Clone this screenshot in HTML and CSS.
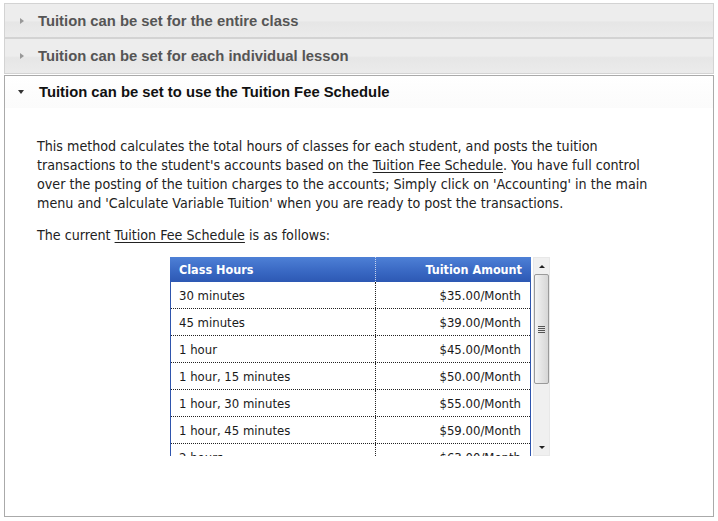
FILE: index.html
```html
<!DOCTYPE html>
<html>
<head>
<meta charset="utf-8">
<link rel="stylesheet" href="styles.css">
</head>
<body>
<div class="accordion">
  <div class="acc-header">
    <span class="tri-right"></span>
    <span class="acc-title">Tuition can be set for the entire class</span>
  </div>
  <div class="acc-header second">
    <span class="tri-right"></span>
    <span class="acc-title">Tuition can be set for each individual lesson</span>
  </div>
  <div class="acc-panel">
    <div class="acc-header active">
      <span class="tri-down"></span>
      <span class="acc-title">Tuition can be set to use the Tuition Fee Schedule</span>
    </div>
    <div class="acc-content">
      <p class="para">This method calculates the total hours of classes for each student, and posts the tuition<br>transactions to the student's accounts based on the <u>Tuition Fee Schedule</u>. You have full control<br>over the posting of the tuition charges to the accounts; Simply click on 'Accounting' in the main<br>menu and 'Calculate Variable Tuition' when you are ready to post the transactions.</p>
      <p class="para second-para">The current <u>Tuition Fee Schedule</u> is as follows:</p>
      <div class="grid">
        <div class="grid-table">
          <div class="grid-head">
            <div class="col-a">Class Hours</div>
            <div class="col-b">Tuition Amount</div>
          </div>
          <div class="grid-body">
            <div class="row"><div class="col-a">30 minutes</div><div class="col-b">$35.00/Month</div></div>
            <div class="row"><div class="col-a">45 minutes</div><div class="col-b">$39.00/Month</div></div>
            <div class="row"><div class="col-a">1 hour</div><div class="col-b">$45.00/Month</div></div>
            <div class="row"><div class="col-a">1 hour, 15 minutes</div><div class="col-b">$50.00/Month</div></div>
            <div class="row"><div class="col-a">1 hour, 30 minutes</div><div class="col-b">$55.00/Month</div></div>
            <div class="row"><div class="col-a">1 hour, 45 minutes</div><div class="col-b">$59.00/Month</div></div>
            <div class="row"><div class="col-a">2 hours</div><div class="col-b">$63.00/Month</div></div>
          </div>
        </div>
        <div class="scrollbar">
          <div class="sb-btn"><span class="sb-up"></span></div>
          <div class="sb-track">
            <div class="sb-thumb"><span class="grip"></span></div>
          </div>
          <div class="sb-btn"><span class="sb-down"></span></div>
        </div>
      </div>
    </div>
  </div>
</div>
</body>
</html>
```

FILE: styles.css
```css
html, body {
  margin: 0;
  padding: 0;
  background: #ffffff;
}
body {
  width: 718px;
  height: 521px;
  overflow: hidden;
}
.accordion {
  margin: 3px 4px 0 4px;
  width: 710px;
  display: flex;
  flex-direction: column;
}
.acc-header {
  box-sizing: border-box;
  height: 35px;
  border: 1px solid #d3d3d3;
  background: linear-gradient(#ededed 0%, #ededed 50%, #e6e6e6 55%, #ebebeb 100%);
  display: flex;
  align-items: center;
  padding-left: 15px;
  font-family: "Liberation Sans", Arial, sans-serif;
  font-weight: bold;
  font-size: 14.8px;
  color: #555555;
}
.acc-header.second {
  height: 36px;
}
.acc-title {
  margin-left: 14px;
}
.tri-right {
  width: 0;
  height: 0;
  border-top: 3.5px solid transparent;
  border-bottom: 3.5px solid transparent;
  border-left: 4px solid #999999;
}
.tri-down {
  width: 0;
  height: 0;
  border-left: 3.5px solid transparent;
  border-right: 3.5px solid transparent;
  border-top: 4px solid #333333;
  margin-left: -1px;
  margin-right: 1px;
}
.acc-panel {
  box-sizing: border-box;
  margin-top: 1px;
  height: 442px;
  border: 1px solid #aaaaaa;
  display: flex;
  flex-direction: column;
}
.acc-header.active {
  border: none;
  height: 32px;
  padding-left: 14px;
  background: linear-gradient(#ffffff, #fbfbfb);
  color: #111111;
}
.acc-content {
  padding: 16px 0 0 32px;
  font-family: "DejaVu Sans Condensed", "DejaVu Sans", sans-serif;
  font-size: 14.15px;
  color: #222222;
}
.para {
  margin: 13px 0 0 0;
  line-height: 19px;
  white-space: nowrap;
}
.para u {
  text-decoration: underline;
  text-underline-offset: 2px;
}
.second-para {
  margin-top: 13px;
}
.grid {
  margin: 12px 0 0 133px;
  width: 380px;
  height: 199px;
  display: flex;
  gap: 2px;
  font-size: 13px;
}
.grid-table {
  width: 361px;
  height: 199px;
  overflow: hidden;
  display: flex;
  flex-direction: column;
}
.grid-head {
  flex: none;
  height: 25px;
  display: flex;
  align-items: center;
  background: linear-gradient(#4e80d6, #3867c2 60%, #2d58b3);
  color: #ffffff;
  font-weight: bold;
  font-size: 12.5px;
}
.grid-head .col-a {
  height: 25px;
  line-height: 25px;
  border-right: 1px dotted #c8d4ee;
}
.grid-head .col-b {
  line-height: 25px;
}
.col-a {
  box-sizing: border-box;
  width: 206px;
  padding-left: 9px;
}
.col-b {
  box-sizing: border-box;
  flex: 1;
  text-align: right;
  padding-right: 9px;
}
.grid-body {
  flex: 1;
  border-left: 1px solid #2f55ad;
  border-right: 1px solid #2f55ad;
  overflow: hidden;
}
.row {
  box-sizing: border-box;
  height: 27px;
  display: flex;
  align-items: center;
  border-bottom: 1px dotted #222222;
  color: #1a1a1a;
}
.row .col-a,
.row .col-b {
  height: 26px;
  line-height: 28px;
}
.row .col-a {
  width: 205px;
  padding-left: 8px;
  border-right: 1px dotted #222222;
}
.scrollbar {
  box-sizing: border-box;
  width: 17px;
  height: 199px;
  background: #f0f0f0;
  border: 1px solid #e8e8e8;
  display: flex;
  flex-direction: column;
}
.sb-btn {
  height: 16px;
  display: flex;
  align-items: center;
  justify-content: center;
}
.sb-up {
  width: 0;
  height: 0;
  border-left: 3px solid transparent;
  border-right: 3px solid transparent;
  border-bottom: 3px solid #222222;
}
.sb-down {
  width: 0;
  height: 0;
  border-left: 3px solid transparent;
  border-right: 3px solid transparent;
  border-top: 3px solid #222222;
}
.sb-track {
  flex: 1;
}
.sb-thumb {
  box-sizing: border-box;
  height: 110px;
  border: 1px solid #9a9a9a;
  border-radius: 2px;
  background: linear-gradient(90deg, #f4f4f4, #e4e4e4 50%, #d6d6d6);
  display: flex;
  align-items: center;
  justify-content: center;
}
.grip {
  width: 7px;
  height: 7px;
  background: repeating-linear-gradient(#555555 0, #555555 1px, transparent 1px, transparent 2px);
}
```
